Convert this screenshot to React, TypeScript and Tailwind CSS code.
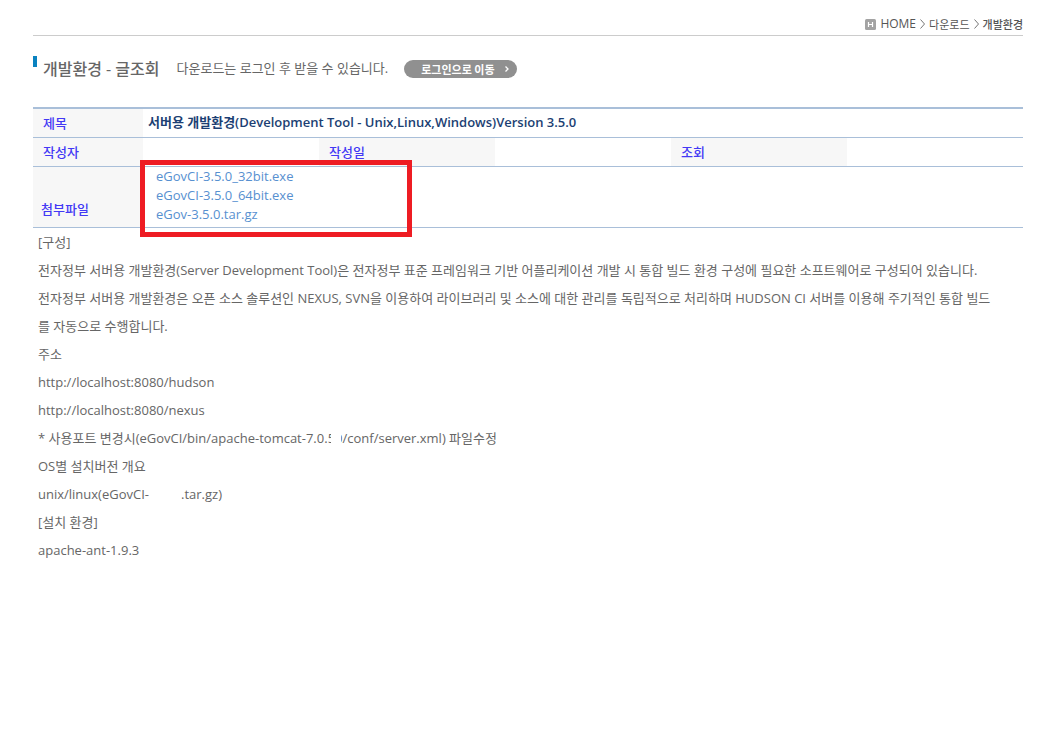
const files = ["eGovCI-3.5.0_32bit.exe", "eGovCI-3.5.0_64bit.exe", "eGov-3.5.0.tar.gz"];

function Breadcrumb() {
  return (
    <nav className="flex h-9 items-center justify-end gap-1 border-b border-[#cccccc] pt-[13px] text-[11px] text-[#555555]">
      <svg viewBox="0 0 11 11" className="h-[11px] w-[11px]" aria-hidden="true">
        <rect width="11" height="11" rx="1.5" fill="#a3a3a3" />
        <path d="M3.5 3v5M7.5 3v5M3.5 5.5h4" stroke="#ffffff" strokeWidth="1.2" fill="none" />
      </svg>
      <a href="#home" className="font-['Open_Sans',sans-serif] text-xs">
        HOME
      </a>
      <BreadcrumbArrow />
      <a href="#download">다운로드</a>
      <BreadcrumbArrow />
      <a href="#dev" className="font-medium">
        개발환경
      </a>
    </nav>
  );
}

function BreadcrumbArrow() {
  return (
    <svg viewBox="0 0 5 10" className="h-[10px] w-[5px]" aria-hidden="true">
      <path d="M0.5 0.5L4.5 5L0.5 9.5" stroke="#777777" fill="none" />
    </svg>
  );
}

function LoginButton() {
  return (
    <button
      type="button"
      className="flex h-[18px] items-center rounded-full bg-[#909090] pr-2 pl-[17px] text-[11px] font-bold text-white"
    >
      <span>로그인으로 이동</span>
      <svg viewBox="0 0 4 6" className="ml-[10px] h-[6px] w-[4px]" aria-hidden="true">
        <path d="M0.5 0.5L3 3L0.5 5.5" stroke="#ffffff" strokeWidth="1.3" fill="none" />
      </svg>
    </button>
  );
}

export default function App() {
  const label = "bg-[#f7f7f7] pl-[10px] text-left font-medium text-[#4339f5]";

  return (
    <main className="bg-white pr-10 pl-[33px] font-['Noto_Sans_CJK_KR',sans-serif] text-[13px] text-[#666666]">
      <Breadcrumb />

      <header className="mt-5 flex h-[26px] items-center">
        <span className="h-[11px] w-1 self-start bg-[#0a82c0]" />
        <h1 className="ml-[6px] font-['Open_Sans','Noto_Sans_CJK_KR',sans-serif] text-base font-medium">개발환경 - 글조회</h1>
        <p className="mr-4 ml-[17px] font-['Open_Sans','Noto_Sans_CJK_KR',sans-serif]">
          다운로드는 로그인 후 받을 수 있습니다.
        </p>
        <LoginButton />
      </header>

      <div className="relative mt-[25px]">
        <table className="w-full table-fixed border-t-2 border-[#a9bfd9]">
          <colgroup>
            <col className="w-[110px]" />
            <col />
            <col />
            <col />
            <col />
            <col />
          </colgroup>
          <tbody>
            <tr className="h-[29px] border-b border-[#a9bfd9]">
              <th scope="row" className={label}>제목</th>
              <td colSpan={5} className="pl-[5px] font-['Open_Sans','Noto_Sans_CJK_KR',sans-serif] font-semibold text-[#1c3f73]">
                서버용 개발환경(Development Tool - Unix,Linux,Windows)Version 3.5.0
              </td>
            </tr>
            <tr className="h-[29px] border-b border-[#a9bfd9]">
              <th scope="row" className={label}>작성자</th>
              <td />
              <th scope="row" className={label}>작성일</th>
              <td />
              <th scope="row" className={label}>조회</th>
              <td />
            </tr>
            <tr className="h-[61px] border-b border-[#a9bfd9]">
              <th scope="row" className="bg-[#f7f7f7] pb-2 pl-2 text-left align-bottom font-medium text-[#4339f5]">
                첨부파일
              </th>
              <td colSpan={5} className="pb-[2px] pl-[13px]">
                <ul className="font-['Open_Sans',sans-serif] leading-[19px] text-[#5790d0]">
                  {files.map((file) => (
                    <li key={file}>
                      <a href={`#${file}`}>{file}</a>
                    </li>
                  ))}
                </ul>
              </td>
            </tr>
          </tbody>
        </table>
        {/* highlight around the attached files */}
        <div className="pointer-events-none absolute top-[53px] left-[107px] h-[77px] w-[272px] border-[5px] border-[#ee1c23]" />
      </div>

      <article className="px-[5px] font-['Open_Sans','Noto_Sans_CJK_KR',sans-serif] leading-7">
        <p>[구성]</p>
        <p>
          전자정부 서버용 개발환경(Server Development Tool)은 전자정부 표준 프레임워크 기반 어플리케이션 개발 시 통합 빌드 환경 구성에 필요한 소프트웨어로 구성되어 있습니다.
        </p>
        <p>
          전자정부 서버용 개발환경은 오픈 소스 솔루션인 NEXUS, SVN을 이용하여 라이브러리 및 소스에 대한 관리를 독립적으로 처리하며 HUDSON CI 서버를 이용해 주기적인 통합 빌드
          <br />를 자동으로 수행합니다.
        </p>
        <p>주소</p>
        <p>http://localhost:8080/hudson</p>
        <p>http://localhost:8080/nexus</p>
        <p>
          * 사용포트 변경시(eGovCI/bin/apache-tomcat-7.0.
          <span className="relative">
            50
            <span className="absolute inset-y-0 right-[2px] left-[3px] bg-white" />
          </span>
          /conf/server.xml) 파일수정
        </p>
        <p>OS별 설치버전 개요</p>
        <p>
          unix/linux(eGovCI-<span className="inline-block w-8" />.tar.gz)
        </p>
        <p>[설치 환경]</p>
        <p>apache-ant-1.9.3</p>
      </article>
    </main>
  );
}
